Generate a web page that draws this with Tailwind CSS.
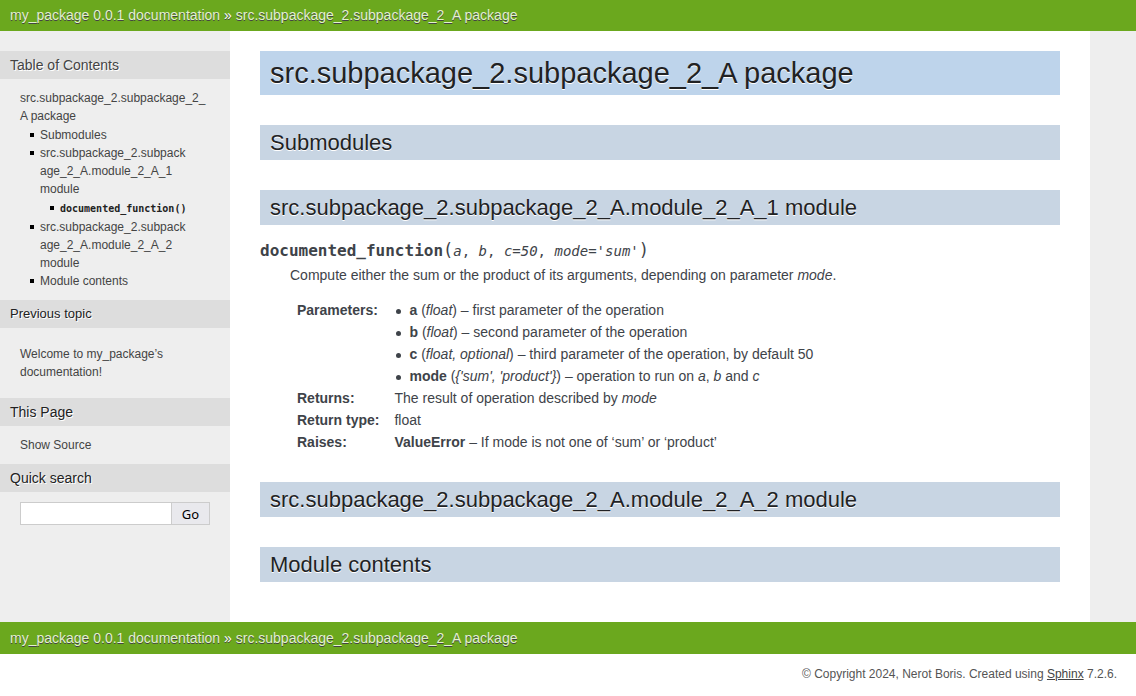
<!DOCTYPE html>
<html lang="en">
<head>
<meta charset="utf-8">
<meta name="viewport" content="width=device-width, initial-scale=1">
<title>src.subpackage_2.subpackage_2_A package — my_package 0.0.1 documentation</title>
<script src="https://cdn.jsdelivr.net/npm/@tailwindcss/browser@4"></script>
</head>
<body class="bg-white font-['Liberation_Sans',Arial,sans-serif] text-[14px] text-[#3e4349]">
  <nav aria-label="Related" class="bg-[#6ba81e] px-[10px] h-[31px] leading-[31px] text-white text-shadow-[0_1px_0_#444]">
    <a href="#" class="text-[#e2f3cc]">my_package 0.0.1 documentation</a> » <a href="#" class="text-[#e2f3cc]">src.subpackage_2.subpackage_2_A package</a>
  </nav>

  <div class="flex bg-[#eee]">
    <aside class="w-[230px] shrink-0 pt-5 text-[12px] leading-[18px] text-[#444]">
      <h3 class="bg-[#ddd] px-[10px] leading-7 text-[14px] text-shadow-[1px_1px_0_white]"><a href="#">Table of Contents</a></h3>
      <ul class="mt-[10px] mb-[10px] px-5 wrap-anywhere">
        <li><a href="#">src.subpackage_2.subpackage_2_A package</a>
          <ul class="px-5 pt-px">
            <li class="before:float-left before:-ml-[10px] before:mr-[6px] before:mt-[7px] before:size-1 before:bg-black"><a href="#">Submodules</a></li>
            <li class="before:float-left before:-ml-[10px] before:mr-[6px] before:mt-[7px] before:size-1 before:bg-black"><a href="#">src.subpackage_2.subpackage_2_A.module_2_A_1 module</a>
              <ul class="-mr-5 pl-5 pt-px">
                <li class="before:float-left before:-ml-[10px] before:mr-[6px] before:mt-[7px] before:size-1 before:bg-black"><a href="#"><code class="font-['DejaVu_Sans_Mono',monospace] text-[10px] font-bold text-[#222]">documented_function()</code></a></li>
              </ul>
            </li>
            <li class="before:float-left before:-ml-[10px] before:mr-[6px] before:mt-[7px] before:size-1 before:bg-black"><a href="#">src.subpackage_2.subpackage_2_A.module_2_A_2 module</a></li>
            <li class="before:float-left before:-ml-[10px] before:mr-[6px] before:mt-[7px] before:size-1 before:bg-black"><a href="#">Module contents</a></li>
          </ul>
        </li>
      </ul>
      <h4 class="bg-[#ddd] px-[10px] leading-7 text-[13px] text-[#222] text-shadow-[1px_1px_0_white]">Previous topic</h4>
      <p class="px-5 py-[17px]"><a href="#">Welcome to my_package’s documentation!</a></p>
      <h3 class="bg-[#ddd] px-[10px] leading-7 text-[14px] text-[#222] text-shadow-[1px_1px_0_white]">This Page</h3>
      <ul class="px-5 py-[10px]"><li><a href="#">Show Source</a></li></ul>
      <h3 class="bg-[#ddd] px-[10px] leading-7 text-[14px] text-[#222] text-shadow-[1px_1px_0_white]"><label for="q">Quick search</label></h3>
      <form class="flex px-5 py-[10px]">
        <input id="q" type="text" class="h-[23px] min-w-0 flex-1 border border-[#ccc] bg-white px-1">
        <button type="button" class="h-[23px] w-[38px] border border-l-0 border-[#ccc] bg-[#e9e9ed] font-['Noto_Sans',sans-serif] text-[13px] leading-[20px] text-black">Go</button>
      </form>
    </aside>

    <main class="min-w-0 flex-1 max-w-[860px] bg-white px-[30px] pt-5 pb-10 leading-[22px]">
      <h1 class="bg-[#bed4eb] px-[10px] text-[29px] leading-[44px] text-[#212224] text-shadow-[0_1px_0_white]">src.subpackage_2.subpackage_2_A package</h1>
      <h2 class="mt-[30px] bg-[#c8d5e3] px-[10px] text-[22px] leading-[35px] text-[#212224] text-shadow-[0_1px_0_white]">Submodules</h2>
      <h2 class="mt-[30px] bg-[#c8d5e3] px-[10px] text-[22px] leading-[35px] text-[#212224] text-shadow-[0_1px_0_white]">src.subpackage_2.subpackage_2_A.module_2_A_1 module</h2>
      <dl class="mt-[13px]">
        <dt class="mb-px font-['DejaVu_Sans_Mono',monospace] leading-6"><code class="font-['DejaVu_Sans_Mono',monospace] text-[16px] font-bold">documented_function</code><span class="text-[17px]">(</span><em>a</em>, <em>b</em>, <em>c=50</em>, <em>mode='sum'</em><span class="text-[17px]">)</span></dt>
        <dd class="ml-[30px]">
          <p>Compute either the sum or the product of its arguments, depending on parameter <em>mode</em>.</p>
          <dl class="mt-[13px] ml-[7px] grid grid-cols-[max-content_1fr] gap-x-[15px]">
            <dt class="font-bold">Parameters:</dt>
            <dd>
              <ul class="pl-[15px]">
                <li class="before:float-left before:-ml-[13px] before:mr-2 before:mt-[10px] before:size-[5px] before:rounded-full before:bg-[#3e4349]"><strong>a</strong> (<em>float</em>) – first parameter of the operation</li>
                <li class="before:float-left before:-ml-[13px] before:mr-2 before:mt-[10px] before:size-[5px] before:rounded-full before:bg-[#3e4349]"><strong>b</strong> (<em>float</em>) – second parameter of the operation</li>
                <li class="before:float-left before:-ml-[13px] before:mr-2 before:mt-[10px] before:size-[5px] before:rounded-full before:bg-[#3e4349]"><strong>c</strong> (<em>float, optional</em>) – third parameter of the operation, by default 50</li>
                <li class="before:float-left before:-ml-[13px] before:mr-2 before:mt-[10px] before:size-[5px] before:rounded-full before:bg-[#3e4349]"><strong>mode</strong> (<em>{'sum', 'product'}</em>) – operation to run on <em>a</em>, <em>b</em> and <em>c</em></li>
              </ul>
            </dd>
            <dt class="font-bold">Returns:</dt>
            <dd>The result of operation described by <em>mode</em></dd>
            <dt class="font-bold">Return type:</dt>
            <dd>float</dd>
            <dt class="font-bold">Raises:</dt>
            <dd><strong>ValueError</strong> – If mode is not one of ‘sum’ or ‘product’</dd>
          </dl>
        </dd>
      </dl>
      <h2 class="mt-[29px] bg-[#c8d5e3] px-[10px] text-[22px] leading-[35px] text-[#212224] text-shadow-[0_1px_0_white]">src.subpackage_2.subpackage_2_A.module_2_A_2 module</h2>
      <h2 class="mt-[30px] bg-[#c8d5e3] px-[10px] text-[22px] leading-[35px] text-[#212224] text-shadow-[0_1px_0_white]">Module contents</h2>
    </main>
  </div>

  <nav aria-label="Related, bottom" class="bg-[#6ba81e] px-[10px] h-8 leading-8 text-white text-shadow-[0_1px_0_#444]">
    <a href="#" class="text-[#e2f3cc]">my_package 0.0.1 documentation</a> » <a href="#" class="text-[#e2f3cc]">src.subpackage_2.subpackage_2_A package</a>
  </nav>
  <footer class="px-[19px] py-[11px] text-right text-[12px] leading-[18px] text-[#555]">© Copyright 2024, Nerot Boris. Created using <a href="https://www.sphinx-doc.org/" class="text-[#444] underline">Sphinx</a> 7.2.6.</footer>
</body>
</html>
